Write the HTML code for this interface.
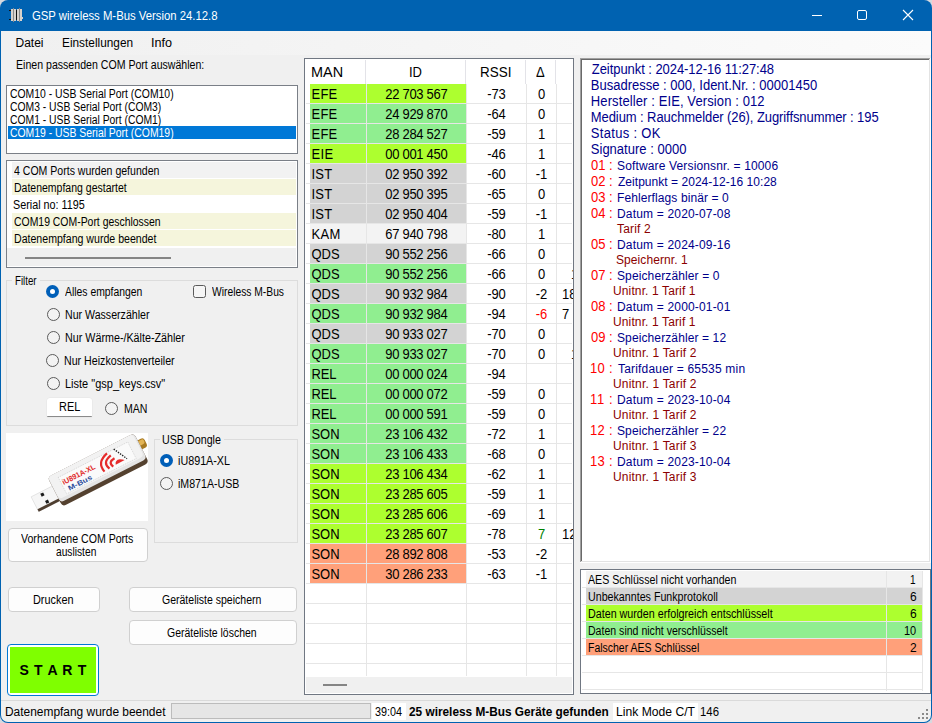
<!DOCTYPE html>
<html><head><meta charset="utf-8"><title>GSP wireless M-Bus</title>
<style>
html,body{margin:0;padding:0;background:#D6D9DF;width:932px;height:723px;overflow:hidden;}
body{position:relative;font-family:"Liberation Sans",sans-serif;}
body div{position:absolute;box-sizing:content-box;}
.t{white-space:pre;}
svg{position:absolute;}
</style></head><body>
<div style="left:0;top:0;width:932px;height:723px;background:#0062B1;border-radius:8px;"></div>
<div style="left:1px;top:31px;width:930px;height:691px;background:#F0F0F0;border-radius:0 0 7px 7px;"></div>
<svg style="left:8px;top:7px" width="16" height="16" viewBox="0 0 16 16">
<rect x="1" y="3" width="2" height="1" fill="#111"/><rect x="1" y="12" width="2" height="1" fill="#111"/>
<rect x="3" y="2" width="5" height="12" fill="#D8D2CC"/><rect x="9" y="2" width="5" height="12" fill="#D8D2CC"/>
<rect x="8" y="3" width="1" height="10" fill="#111"/>
<rect x="5" y="1" width="1" height="14" fill="#8A8A8A"/><rect x="11" y="1" width="1" height="14" fill="#8A8A8A"/>
<rect x="14" y="10" width="1" height="2" fill="#D8D2CC"/>
</svg>
<div class="t" style="left:32.03px;top:10.00px;font-size:12px;line-height:12px;color:#fff;transform:scale(0.9439,1.0000);transform-origin:0 0;">GSP wireless M-Bus Version 24.12.8</div>
<svg style="left:800px;top:0" width="132" height="31" viewBox="0 0 132 31">
<rect x="12" y="15" width="10" height="1" fill="#fff"/>
<rect x="57.5" y="10.5" width="9" height="9" rx="1.5" fill="none" stroke="#fff" stroke-width="1"/>
<path d="M103 10 L113 20 M113 10 L103 20" stroke="#fff" stroke-width="1.1"/>
</svg>
<div style="left:1px;top:31px;width:930px;height:24px;background:linear-gradient(to right,#F0F0F0,#FBFBFB);"></div>
<div class="t" style="left:15.50px;top:37.00px;font-size:12px;line-height:12px;color:#000;">Datei</div>
<div class="t" style="left:61.52px;top:37.00px;font-size:12px;line-height:12px;color:#000;transform:scale(0.9859,1.0000);transform-origin:0 0;">Einstellungen</div>
<div class="t" style="left:151.42px;top:37.00px;font-size:12px;line-height:12px;color:#000;transform:scale(1.0526,1.0000);transform-origin:0 0;">Info</div>
<div class="t" style="left:16.18px;top:59.00px;font-size:12px;line-height:12px;color:#000;transform:scale(0.8821,1.0000);transform-origin:0 0;">Einen passenden COM Port auswählen:</div>
<div style="left:6px;top:85px;width:290px;height:67px;background:#fff;border:1px solid #7A7F87;"></div>
<div class="t" style="left:10.07px;top:88.00px;font-size:12px;line-height:12px;color:#000;transform:scale(0.8670,1.0000);transform-origin:0 0;">COM10 - USB Serial Port (COM10)</div>
<div class="t" style="left:10.07px;top:101.00px;font-size:12px;line-height:12px;color:#000;transform:scale(0.8629,1.0000);transform-origin:0 0;">COM3 - USB Serial Port (COM3)</div>
<div class="t" style="left:10.07px;top:114.00px;font-size:12px;line-height:12px;color:#000;transform:scale(0.8629,1.0000);transform-origin:0 0;">COM1 - USB Serial Port (COM1)</div>
<div style="left:8px;top:126px;width:288px;height:13px;background:#0078D7;"></div>
<div class="t" style="left:10.07px;top:127.00px;font-size:12px;line-height:12px;color:#fff;transform:scale(0.8670,1.0000);transform-origin:0 0;">COM19 - USB Serial Port (COM19)</div>
<div style="left:6px;top:160px;width:290px;height:106px;background:#fff;border:1px solid #7A7F87;"></div>
<div style="left:12px;top:162px;width:284px;height:16px;background:#F2F2F2;"></div>
<div class="t" style="left:14.06px;top:165.00px;font-size:12px;line-height:12px;color:#000;transform:scale(0.8788,1.0000);transform-origin:0 0;">4 COM Ports wurden gefunden</div>
<div style="left:12px;top:179px;width:284px;height:16px;background:#F5F5DC;"></div>
<div class="t" style="left:14.19px;top:182.00px;font-size:12px;line-height:12px;color:#000;transform:scale(0.8750,1.0000);transform-origin:0 0;">Datenempfang gestartet</div>
<div style="left:12px;top:196px;width:284px;height:16px;background:#FFFFFF;"></div>
<div class="t" style="left:13.15px;top:199.00px;font-size:12px;line-height:12px;color:#000;transform:scale(0.8987,1.0000);transform-origin:0 0;">Serial no: 1195</div>
<div style="left:12px;top:213px;width:284px;height:16px;background:#F5F5DC;"></div>
<div class="t" style="left:14.07px;top:216.00px;font-size:12px;line-height:12px;color:#000;transform:scale(0.8690,1.0000);transform-origin:0 0;">COM19 COM-Port geschlossen</div>
<div style="left:12px;top:230px;width:284px;height:16px;background:#F5F5DC;"></div>
<div class="t" style="left:14.18px;top:233.00px;font-size:12px;line-height:12px;color:#000;transform:scale(0.8820,1.0000);transform-origin:0 0;">Datenempfang wurde beendet</div>
<div style="left:7px;top:248px;width:289px;height:18px;background:#F0F0F0;"></div>
<div style="left:25px;top:257px;width:146px;height:2px;background:#858585;"></div>
<div style="left:6px;top:280px;width:290px;height:144px;border:1px solid #DCDCDC;"></div>
<div style="left:12px;top:276px;width:28px;height:10px;background:#F0F0F0;"></div>
<div class="t" style="left:15.29px;top:275.00px;font-size:12px;line-height:12px;color:#000;transform:scale(0.8077,1.0000);transform-origin:0 0;">Filter</div>
<svg style="left:46px;top:285px" width="13" height="13" viewBox="0 0 13 13"><circle cx="6.5" cy="6.5" r="6.5" fill="#005FB8"/><circle cx="6.5" cy="6.5" r="2.5" fill="#fff"/></svg>
<div class="t" style="left:65.07px;top:286.00px;font-size:12px;line-height:12px;color:#000;transform:scale(0.8652,1.0000);transform-origin:0 0;">Alles empfangen</div>
<svg style="left:47px;top:308px" width="13" height="13" viewBox="0 0 13 13"><circle cx="6.5" cy="6.5" r="6" fill="#F3F3F3" stroke="#5A5A5A" stroke-width="1"/></svg>
<div class="t" style="left:65.17px;top:309.00px;font-size:12px;line-height:12px;color:#000;transform:scale(0.8842,1.0000);transform-origin:0 0;">Nur Wasserzähler</div>
<svg style="left:47px;top:331px" width="13" height="13" viewBox="0 0 13 13"><circle cx="6.5" cy="6.5" r="6" fill="#F3F3F3" stroke="#5A5A5A" stroke-width="1"/></svg>
<div class="t" style="left:65.16px;top:332.00px;font-size:12px;line-height:12px;color:#000;transform:scale(0.8947,1.0000);transform-origin:0 0;">Nur Wärme-/Kälte-Zähler</div>
<svg style="left:46px;top:354px" width="13" height="13" viewBox="0 0 13 13"><circle cx="6.5" cy="6.5" r="6" fill="#F3F3F3" stroke="#5A5A5A" stroke-width="1"/></svg>
<div class="t" style="left:64.17px;top:355.00px;font-size:12px;line-height:12px;color:#000;transform:scale(0.8871,1.0000);transform-origin:0 0;">Nur Heizkostenverteiler</div>
<svg style="left:47px;top:377px" width="13" height="13" viewBox="0 0 13 13"><circle cx="6.5" cy="6.5" r="6" fill="#F3F3F3" stroke="#5A5A5A" stroke-width="1"/></svg>
<div class="t" style="left:65.12px;top:378.00px;font-size:12px;line-height:12px;color:#000;transform:scale(0.9167,1.0000);transform-origin:0 0;">Liste &quot;gsp_keys.csv&quot;</div>
<svg style="left:193px;top:285px" width="14" height="14" viewBox="0 0 14 14"><rect x="0.5" y="0.5" width="12" height="12" rx="2" fill="#F5F5F5" stroke="#5A5A5A" stroke-width="1"/></svg>
<div class="t" style="left:212.07px;top:286.00px;font-size:12px;line-height:12px;color:#000;transform:scale(0.8571,1.0000);transform-origin:0 0;">Wireless M-Bus</div>
<div style="left:47px;top:398px;width:45px;height:19px;background:#fff;border-bottom:1px solid #8A8A8A;box-sizing:border-box;border-radius:3px 3px 1px 1px;box-shadow:0 0 0 0.5px #E4E4E4;"></div>
<div class="t" style="left:59.14px;top:401.00px;font-size:12px;line-height:12px;color:#000;transform:scale(0.9091,1.0000);transform-origin:0 0;">REL</div>
<svg style="left:105px;top:402px" width="13" height="13" viewBox="0 0 13 13"><circle cx="6.5" cy="6.5" r="6" fill="#F3F3F3" stroke="#5A5A5A" stroke-width="1"/></svg>
<div class="t" style="left:124.18px;top:403.00px;font-size:12px;line-height:12px;color:#000;transform:scale(0.8800,1.0000);transform-origin:0 0;">MAN</div>
<svg style="left:6px;top:433px" width="142" height="88" viewBox="6 433 142 88">
<rect x="6" y="433" width="142" height="88" fill="#fff"/>
<g transform="translate(98,469.5) rotate(-27)">
 <rect x="-72" y="-6" width="27" height="16.5" fill="#F6F6F6" stroke="#DADADA" stroke-width="0.6"/>
 <rect x="-72" y="8" width="27" height="2.8" fill="#4E3E30"/>
 <rect x="-62.5" y="-4.5" width="3.2" height="3.2" fill="#1A1A1A"/>
 <rect x="-61.5" y="4" width="3.2" height="3.2" fill="#1A1A1A"/>
 <rect x="42" y="-8" width="13" height="10" rx="3" fill="#A87A22"/>
 <rect x="45" y="-7" width="9" height="5" rx="2" fill="#E2B455"/>
 <rect x="-48.5" y="-16" width="97" height="33" rx="4" fill="#54412F"/>
 <rect x="-48.5" y="-16" width="97" height="28.5" rx="4" fill="#E4E4E4"/>
 <rect x="-48" y="-16" width="95" height="25" rx="4" fill="#F2F2F2"/>
 <rect x="-39" y="-11" width="78" height="18.5" fill="#FAFAFA" stroke="#BDBDBD" stroke-width="0.5" stroke-dasharray="1 1"/>
 <text x="-37.5" y="-1.8" font-family="Liberation Sans" font-weight="bold" font-size="7.6" fill="#E02828" textLength="36" lengthAdjust="spacingAndGlyphs">iU891A-XL</text>
 <text x="-35" y="6" font-family="Liberation Sans" font-weight="bold" font-size="7" fill="#2B4C9B" textLength="26" lengthAdjust="spacingAndGlyphs">M-Bus</text>
</g>
<g fill="none" stroke="#E52B2B" stroke-width="2.2" stroke-linecap="butt">
 <path d="M107 453.3 Q96.5 462.4 104.5 471.6"/>
 <path d="M110.8 455.4 Q101.8 462.8 109.5 468.7"/>
 <path d="M114.5 458.3 Q107.5 462.4 113.3 466.6"/>
</g>
<path d="M115.7 464.8 Q114.8 459.8 119.9 459.3 Q122.5 459.3 124.6 460.1 Z" fill="#E52B2B"/>
<path d="M113.7 449.1 L127 458.7" stroke="#222" stroke-width="1.4" stroke-dasharray="1.4 1.2"/>
</svg>
<div style="left:154px;top:439px;width:142px;height:102px;border:1px solid #DCDCDC;"></div>
<div style="left:160px;top:434px;width:64px;height:10px;background:#F0F0F0;"></div>
<div class="t" style="left:162.16px;top:434.00px;font-size:12px;line-height:12px;color:#000;transform:scale(0.8923,1.0000);transform-origin:0 0;">USB Dongle</div>
<svg style="left:160px;top:454px" width="13" height="13" viewBox="0 0 13 13"><circle cx="6.5" cy="6.5" r="6.5" fill="#005FB8"/><circle cx="6.5" cy="6.5" r="2.5" fill="#fff"/></svg>
<div class="t" style="left:178.05px;top:455.00px;font-size:12px;line-height:12px;color:#000;transform:scale(0.8966,1.0000);transform-origin:0 0;">iU891A-XL</div>
<svg style="left:160px;top:477px" width="13" height="13" viewBox="0 0 13 13"><circle cx="6.5" cy="6.5" r="6" fill="#F3F3F3" stroke="#5A5A5A" stroke-width="1"/></svg>
<div class="t" style="left:178.06px;top:478.00px;font-size:12px;line-height:12px;color:#000;transform:scale(0.8841,1.0000);transform-origin:0 0;">iM871A-USB</div>
<div style="left:8px;top:528px;width:138px;height:32px;background:#FDFDFD;border:1px solid #D0D0D0;border-radius:4px;"></div>
<div class="t" style="left:21.06px;top:533.00px;font-size:12px;line-height:12px;color:#000;transform:scale(0.8819,1.0000);transform-origin:0 0;">Vorhandene COM Ports</div>
<div class="t" style="left:56.07px;top:546.00px;font-size:12px;line-height:12px;color:#000;transform:scale(0.8511,1.0000);transform-origin:0 0;">auslisten</div>
<div style="left:8px;top:587px;width:90px;height:23px;background:#FDFDFD;border:1px solid #D0D0D0;border-radius:4px;"></div>
<div class="t" style="left:33.14px;top:594.00px;font-size:12px;line-height:12px;color:#000;transform:scale(0.9070,1.0000);transform-origin:0 0;">Drucken</div>
<div style="left:129px;top:587px;width:166px;height:23px;background:#FDFDFD;border:1px solid #D0D0D0;border-radius:4px;"></div>
<div class="t" style="left:162.06px;top:594.00px;font-size:12px;line-height:12px;color:#000;transform:scale(0.8761,1.0000);transform-origin:0 0;">Geräteliste speichern</div>
<div style="left:129px;top:620px;width:166px;height:23px;background:#FDFDFD;border:1px solid #D0D0D0;border-radius:4px;"></div>
<div class="t" style="left:167.06px;top:627.00px;font-size:12px;line-height:12px;color:#000;transform:scale(0.8725,1.0000);transform-origin:0 0;">Geräteliste löschen</div>
<div style="left:7px;top:644px;width:90px;height:50px;border:1px solid #0078D4;border-radius:4px;background:#fff;"></div>
<div style="left:10px;top:647px;width:86px;height:46px;background:#7FFF00;"></div>
<div class="t" style="left:19.50px;top:663.00px;font-size:14px;line-height:14px;font-weight:bold;color:#000;letter-spacing:0.688px;">S T A R T</div>
<div style="left:1px;top:700px;width:930px;height:1px;background:#DADADA;"></div>
<div class="t" style="left:5.01px;top:706.00px;font-size:12px;line-height:12px;color:#000;transform:scale(0.9938,1.0000);transform-origin:0 0;">Datenempfang wurde beendet</div>
<div style="left:171px;top:703px;width:200px;height:16px;background:#E6E6E6;border:1px solid #BCBCBC;box-sizing:border-box;"></div>
<div style="left:372px;top:703px;width:34px;height:17px;background:#fff;"></div>
<div class="t" style="left:375.05px;top:706.00px;font-size:12px;line-height:12px;color:#000;transform:scale(0.9000,1.0000);transform-origin:0 0;">39:04</div>
<div class="t" style="left:409.01px;top:706.00px;font-size:12px;line-height:12px;font-weight:bold;color:#000;transform:scale(0.9852,1.0000);transform-origin:0 0;">25 wireless M-Bus Geräte gefunden</div>
<div style="left:613px;top:703px;width:85px;height:17px;background:#fff;"></div>
<div class="t" style="left:615.98px;top:706.00px;font-size:12px;line-height:12px;color:#000;transform:scale(1.0130,1.0000);transform-origin:0 0;">Link Mode C/T</div>
<div class="t" style="left:700.08px;top:706.00px;font-size:12px;line-height:12px;color:#000;transform:scale(0.9474,1.0000);transform-origin:0 0;">146</div>
<div style="left:926px;top:709px;width:2px;height:2px;background:#8A8A8A;"></div>
<div style="left:922px;top:713px;width:2px;height:2px;background:#8A8A8A;"></div>
<div style="left:926px;top:713px;width:2px;height:2px;background:#8A8A8A;"></div>
<div style="left:918px;top:717px;width:2px;height:2px;background:#8A8A8A;"></div>
<div style="left:922px;top:717px;width:2px;height:2px;background:#8A8A8A;"></div>
<div style="left:926px;top:717px;width:2px;height:2px;background:#8A8A8A;"></div>
<div style="left:304px;top:58px;width:268px;height:635px;background:#fff;border:1px solid #707782;"></div>
<div class="t" style="left:310.83px;top:65.12px;font-size:13px;line-height:13px;color:#000;transform:scale(1.1111,1.0800);transform-origin:0 0;">MAN</div>
<div class="t" style="left:409.00px;top:65.12px;font-size:13px;line-height:13px;color:#000;transform:scale(1.0000,1.0800);transform-origin:0 0;">ID</div>
<div class="t" style="left:479.95px;top:65.12px;font-size:13px;line-height:13px;color:#000;transform:scale(1.0345,1.0800);transform-origin:0 0;">RSSI</div>
<div class="t" style="left:536.00px;top:65.12px;font-size:13px;line-height:13px;color:#000;transform:scale(1.0000,1.0800);transform-origin:0 0;">Δ</div>
<div style="left:365px;top:60px;width:1px;height:24px;background:#E3E3E8;"></div>
<div style="left:465px;top:60px;width:1px;height:24px;background:#E3E3E8;"></div>
<div style="left:525px;top:60px;width:1px;height:24px;background:#E3E3E8;"></div>
<div style="left:555px;top:60px;width:1px;height:24px;background:#E3E3E8;"></div>
<div style="left:366px;top:84px;width:1px;height:592px;background:#E6E6E6;"></div>
<div style="left:466px;top:84px;width:1px;height:592px;background:#E6E6E6;"></div>
<div style="left:526px;top:84px;width:1px;height:592px;background:#E6E6E6;"></div>
<div style="left:556px;top:84px;width:1px;height:592px;background:#E6E6E6;"></div>
<div style="left:306px;top:103px;width:266px;height:1px;background:#E6E6E6;"></div>
<div style="left:306px;top:123px;width:266px;height:1px;background:#E6E6E6;"></div>
<div style="left:306px;top:143px;width:266px;height:1px;background:#E6E6E6;"></div>
<div style="left:306px;top:163px;width:266px;height:1px;background:#E6E6E6;"></div>
<div style="left:306px;top:183px;width:266px;height:1px;background:#E6E6E6;"></div>
<div style="left:306px;top:203px;width:266px;height:1px;background:#E6E6E6;"></div>
<div style="left:306px;top:223px;width:266px;height:1px;background:#E6E6E6;"></div>
<div style="left:306px;top:243px;width:266px;height:1px;background:#E6E6E6;"></div>
<div style="left:306px;top:263px;width:266px;height:1px;background:#E6E6E6;"></div>
<div style="left:306px;top:283px;width:266px;height:1px;background:#E6E6E6;"></div>
<div style="left:306px;top:303px;width:266px;height:1px;background:#E6E6E6;"></div>
<div style="left:306px;top:323px;width:266px;height:1px;background:#E6E6E6;"></div>
<div style="left:306px;top:343px;width:266px;height:1px;background:#E6E6E6;"></div>
<div style="left:306px;top:363px;width:266px;height:1px;background:#E6E6E6;"></div>
<div style="left:306px;top:383px;width:266px;height:1px;background:#E6E6E6;"></div>
<div style="left:306px;top:403px;width:266px;height:1px;background:#E6E6E6;"></div>
<div style="left:306px;top:423px;width:266px;height:1px;background:#E6E6E6;"></div>
<div style="left:306px;top:443px;width:266px;height:1px;background:#E6E6E6;"></div>
<div style="left:306px;top:463px;width:266px;height:1px;background:#E6E6E6;"></div>
<div style="left:306px;top:483px;width:266px;height:1px;background:#E6E6E6;"></div>
<div style="left:306px;top:503px;width:266px;height:1px;background:#E6E6E6;"></div>
<div style="left:306px;top:523px;width:266px;height:1px;background:#E6E6E6;"></div>
<div style="left:306px;top:543px;width:266px;height:1px;background:#E6E6E6;"></div>
<div style="left:306px;top:563px;width:266px;height:1px;background:#E6E6E6;"></div>
<div style="left:306px;top:583px;width:266px;height:1px;background:#E6E6E6;"></div>
<div style="left:306px;top:603px;width:266px;height:1px;background:#E6E6E6;"></div>
<div style="left:306px;top:623px;width:266px;height:1px;background:#E6E6E6;"></div>
<div style="left:306px;top:643px;width:266px;height:1px;background:#E6E6E6;"></div>
<div style="left:306px;top:663px;width:266px;height:1px;background:#E6E6E6;"></div>
<div style="left:310px;top:84px;width:56px;height:19px;background:#ADFF2F;"></div>
<div style="left:367px;top:84px;width:99px;height:19px;background:#ADFF2F;"></div>
<div class="t" style="left:311.5px;top:87.12px;font-size:13px;line-height:13px;color:#000;letter-spacing:0.239px;transform:scaleY(1.08);transform-origin:0 0;">EFE</div>
<div class="t" style="left:356.5px;top:87.12px;width:120px;text-align:center;font-size:13px;line-height:13px;color:#000;letter-spacing:-0.300px;text-indent:-0.300px;transform:scaleY(1.08);transform-origin:0 0;">22 703 567</div>
<div class="t" style="left:436.5px;top:87.12px;width:120px;text-align:center;font-size:13px;line-height:13px;color:#000;letter-spacing:-0.263px;text-indent:-0.263px;transform:scaleY(1.08);transform-origin:0 0;">-73</div>
<div class="t" style="left:481.5px;top:87.12px;width:120px;text-align:center;font-size:13px;line-height:13px;color:#000;letter-spacing:0.000px;text-indent:0.000px;transform:scaleY(1.08);transform-origin:0 0;">0</div>
<div style="left:310px;top:104px;width:56px;height:19px;background:#90EE90;"></div>
<div style="left:367px;top:104px;width:99px;height:19px;background:#90EE90;"></div>
<div class="t" style="left:311.5px;top:107.12px;font-size:13px;line-height:13px;color:#000;letter-spacing:0.239px;transform:scaleY(1.08);transform-origin:0 0;">EFE</div>
<div class="t" style="left:356.5px;top:107.12px;width:120px;text-align:center;font-size:13px;line-height:13px;color:#000;letter-spacing:-0.300px;text-indent:-0.300px;transform:scaleY(1.08);transform-origin:0 0;">24 929 870</div>
<div class="t" style="left:436.5px;top:107.12px;width:120px;text-align:center;font-size:13px;line-height:13px;color:#000;letter-spacing:-0.263px;text-indent:-0.263px;transform:scaleY(1.08);transform-origin:0 0;">-64</div>
<div class="t" style="left:481.5px;top:107.12px;width:120px;text-align:center;font-size:13px;line-height:13px;color:#000;letter-spacing:0.000px;text-indent:0.000px;transform:scaleY(1.08);transform-origin:0 0;">0</div>
<div style="left:310px;top:124px;width:56px;height:19px;background:#90EE90;"></div>
<div style="left:367px;top:124px;width:99px;height:19px;background:#90EE90;"></div>
<div class="t" style="left:311.5px;top:127.12px;font-size:13px;line-height:13px;color:#000;letter-spacing:0.239px;transform:scaleY(1.08);transform-origin:0 0;">EFE</div>
<div class="t" style="left:356.5px;top:127.12px;width:120px;text-align:center;font-size:13px;line-height:13px;color:#000;letter-spacing:-0.300px;text-indent:-0.300px;transform:scaleY(1.08);transform-origin:0 0;">28 284 527</div>
<div class="t" style="left:436.5px;top:127.12px;width:120px;text-align:center;font-size:13px;line-height:13px;color:#000;letter-spacing:-0.263px;text-indent:-0.263px;transform:scaleY(1.08);transform-origin:0 0;">-59</div>
<div class="t" style="left:481.5px;top:127.12px;width:120px;text-align:center;font-size:13px;line-height:13px;color:#000;letter-spacing:0.000px;text-indent:0.000px;transform:scaleY(1.08);transform-origin:0 0;">1</div>
<div style="left:310px;top:144px;width:56px;height:19px;background:#ADFF2F;"></div>
<div style="left:367px;top:144px;width:99px;height:19px;background:#ADFF2F;"></div>
<div class="t" style="left:311.5px;top:147.12px;font-size:13px;line-height:13px;color:#000;letter-spacing:0.349px;transform:scaleY(1.08);transform-origin:0 0;">EIE</div>
<div class="t" style="left:356.5px;top:147.12px;width:120px;text-align:center;font-size:13px;line-height:13px;color:#000;letter-spacing:-0.300px;text-indent:-0.300px;transform:scaleY(1.08);transform-origin:0 0;">00 001 450</div>
<div class="t" style="left:436.5px;top:147.12px;width:120px;text-align:center;font-size:13px;line-height:13px;color:#000;letter-spacing:-0.263px;text-indent:-0.263px;transform:scaleY(1.08);transform-origin:0 0;">-46</div>
<div class="t" style="left:481.5px;top:147.12px;width:120px;text-align:center;font-size:13px;line-height:13px;color:#000;letter-spacing:0.000px;text-indent:0.000px;transform:scaleY(1.08);transform-origin:0 0;">1</div>
<div style="left:310px;top:164px;width:56px;height:19px;background:#D3D3D3;"></div>
<div style="left:367px;top:164px;width:99px;height:19px;background:#D3D3D3;"></div>
<div class="t" style="left:311.5px;top:167.12px;font-size:13px;line-height:13px;color:#000;letter-spacing:0.259px;transform:scaleY(1.08);transform-origin:0 0;">IST</div>
<div class="t" style="left:356.5px;top:167.12px;width:120px;text-align:center;font-size:13px;line-height:13px;color:#000;letter-spacing:-0.300px;text-indent:-0.300px;transform:scaleY(1.08);transform-origin:0 0;">02 950 392</div>
<div class="t" style="left:436.5px;top:167.12px;width:120px;text-align:center;font-size:13px;line-height:13px;color:#000;letter-spacing:-0.263px;text-indent:-0.263px;transform:scaleY(1.08);transform-origin:0 0;">-60</div>
<div class="t" style="left:481.5px;top:167.12px;width:120px;text-align:center;font-size:13px;line-height:13px;color:#000;letter-spacing:-0.280px;text-indent:-0.280px;transform:scaleY(1.08);transform-origin:0 0;">-1</div>
<div style="left:310px;top:184px;width:56px;height:19px;background:#D3D3D3;"></div>
<div style="left:367px;top:184px;width:99px;height:19px;background:#D3D3D3;"></div>
<div class="t" style="left:311.5px;top:187.12px;font-size:13px;line-height:13px;color:#000;letter-spacing:0.259px;transform:scaleY(1.08);transform-origin:0 0;">IST</div>
<div class="t" style="left:356.5px;top:187.12px;width:120px;text-align:center;font-size:13px;line-height:13px;color:#000;letter-spacing:-0.300px;text-indent:-0.300px;transform:scaleY(1.08);transform-origin:0 0;">02 950 395</div>
<div class="t" style="left:436.5px;top:187.12px;width:120px;text-align:center;font-size:13px;line-height:13px;color:#000;letter-spacing:-0.263px;text-indent:-0.263px;transform:scaleY(1.08);transform-origin:0 0;">-65</div>
<div class="t" style="left:481.5px;top:187.12px;width:120px;text-align:center;font-size:13px;line-height:13px;color:#000;letter-spacing:0.000px;text-indent:0.000px;transform:scaleY(1.08);transform-origin:0 0;">0</div>
<div style="left:310px;top:204px;width:56px;height:19px;background:#D3D3D3;"></div>
<div style="left:367px;top:204px;width:99px;height:19px;background:#D3D3D3;"></div>
<div class="t" style="left:311.5px;top:207.12px;font-size:13px;line-height:13px;color:#000;letter-spacing:0.259px;transform:scaleY(1.08);transform-origin:0 0;">IST</div>
<div class="t" style="left:356.5px;top:207.12px;width:120px;text-align:center;font-size:13px;line-height:13px;color:#000;letter-spacing:-0.300px;text-indent:-0.300px;transform:scaleY(1.08);transform-origin:0 0;">02 950 404</div>
<div class="t" style="left:436.5px;top:207.12px;width:120px;text-align:center;font-size:13px;line-height:13px;color:#000;letter-spacing:-0.263px;text-indent:-0.263px;transform:scaleY(1.08);transform-origin:0 0;">-59</div>
<div class="t" style="left:481.5px;top:207.12px;width:120px;text-align:center;font-size:13px;line-height:13px;color:#000;letter-spacing:-0.280px;text-indent:-0.280px;transform:scaleY(1.08);transform-origin:0 0;">-1</div>
<div style="left:310px;top:224px;width:56px;height:19px;background:#F3F3F3;"></div>
<div style="left:367px;top:224px;width:99px;height:19px;background:#F3F3F3;"></div>
<div class="t" style="left:311.5px;top:227.12px;font-size:13px;line-height:13px;color:#000;letter-spacing:0.276px;transform:scaleY(1.08);transform-origin:0 0;">KAM</div>
<div class="t" style="left:356.5px;top:227.12px;width:120px;text-align:center;font-size:13px;line-height:13px;color:#000;letter-spacing:-0.300px;text-indent:-0.300px;transform:scaleY(1.08);transform-origin:0 0;">67 940 798</div>
<div class="t" style="left:436.5px;top:227.12px;width:120px;text-align:center;font-size:13px;line-height:13px;color:#000;letter-spacing:-0.263px;text-indent:-0.263px;transform:scaleY(1.08);transform-origin:0 0;">-80</div>
<div class="t" style="left:481.5px;top:227.12px;width:120px;text-align:center;font-size:13px;line-height:13px;color:#000;letter-spacing:0.000px;text-indent:0.000px;transform:scaleY(1.08);transform-origin:0 0;">1</div>
<div style="left:310px;top:244px;width:56px;height:19px;background:#D3D3D3;"></div>
<div style="left:367px;top:244px;width:99px;height:19px;background:#D3D3D3;"></div>
<div class="t" style="left:311.5px;top:247.12px;font-size:13px;line-height:13px;color:#000;letter-spacing:-0.057px;transform:scaleY(1.08);transform-origin:0 0;">QDS</div>
<div class="t" style="left:356.5px;top:247.12px;width:120px;text-align:center;font-size:13px;line-height:13px;color:#000;letter-spacing:-0.300px;text-indent:-0.300px;transform:scaleY(1.08);transform-origin:0 0;">90 552 256</div>
<div class="t" style="left:436.5px;top:247.12px;width:120px;text-align:center;font-size:13px;line-height:13px;color:#000;letter-spacing:-0.263px;text-indent:-0.263px;transform:scaleY(1.08);transform-origin:0 0;">-66</div>
<div class="t" style="left:481.5px;top:247.12px;width:120px;text-align:center;font-size:13px;line-height:13px;color:#000;letter-spacing:0.000px;text-indent:0.000px;transform:scaleY(1.08);transform-origin:0 0;">0</div>
<div style="left:310px;top:264px;width:56px;height:19px;background:#90EE90;"></div>
<div style="left:367px;top:264px;width:99px;height:19px;background:#90EE90;"></div>
<div class="t" style="left:311.5px;top:267.12px;font-size:13px;line-height:13px;color:#000;letter-spacing:-0.057px;transform:scaleY(1.08);transform-origin:0 0;">QDS</div>
<div class="t" style="left:356.5px;top:267.12px;width:120px;text-align:center;font-size:13px;line-height:13px;color:#000;letter-spacing:-0.300px;text-indent:-0.300px;transform:scaleY(1.08);transform-origin:0 0;">90 552 256</div>
<div class="t" style="left:436.5px;top:267.12px;width:120px;text-align:center;font-size:13px;line-height:13px;color:#000;letter-spacing:-0.263px;text-indent:-0.263px;transform:scaleY(1.08);transform-origin:0 0;">-66</div>
<div class="t" style="left:481.5px;top:267.12px;width:120px;text-align:center;font-size:13px;line-height:13px;color:#000;letter-spacing:0.000px;text-indent:0.000px;transform:scaleY(1.08);transform-origin:0 0;">0</div>
<div style="left:310px;top:284px;width:56px;height:19px;background:#D3D3D3;"></div>
<div style="left:367px;top:284px;width:99px;height:19px;background:#D3D3D3;"></div>
<div class="t" style="left:311.5px;top:287.12px;font-size:13px;line-height:13px;color:#000;letter-spacing:-0.057px;transform:scaleY(1.08);transform-origin:0 0;">QDS</div>
<div class="t" style="left:356.5px;top:287.12px;width:120px;text-align:center;font-size:13px;line-height:13px;color:#000;letter-spacing:-0.300px;text-indent:-0.300px;transform:scaleY(1.08);transform-origin:0 0;">90 932 984</div>
<div class="t" style="left:436.5px;top:287.12px;width:120px;text-align:center;font-size:13px;line-height:13px;color:#000;letter-spacing:-0.263px;text-indent:-0.263px;transform:scaleY(1.08);transform-origin:0 0;">-90</div>
<div class="t" style="left:481.5px;top:287.12px;width:120px;text-align:center;font-size:13px;line-height:13px;color:#000;letter-spacing:-0.280px;text-indent:-0.280px;transform:scaleY(1.08);transform-origin:0 0;">-2</div>
<div style="left:310px;top:304px;width:56px;height:19px;background:#90EE90;"></div>
<div style="left:367px;top:304px;width:99px;height:19px;background:#90EE90;"></div>
<div class="t" style="left:311.5px;top:307.12px;font-size:13px;line-height:13px;color:#000;letter-spacing:-0.057px;transform:scaleY(1.08);transform-origin:0 0;">QDS</div>
<div class="t" style="left:356.5px;top:307.12px;width:120px;text-align:center;font-size:13px;line-height:13px;color:#000;letter-spacing:-0.300px;text-indent:-0.300px;transform:scaleY(1.08);transform-origin:0 0;">90 932 984</div>
<div class="t" style="left:436.5px;top:307.12px;width:120px;text-align:center;font-size:13px;line-height:13px;color:#000;letter-spacing:-0.263px;text-indent:-0.263px;transform:scaleY(1.08);transform-origin:0 0;">-94</div>
<div class="t" style="left:481.5px;top:307.12px;width:120px;text-align:center;font-size:13px;line-height:13px;color:#FF0000;letter-spacing:-0.280px;text-indent:-0.280px;transform:scaleY(1.08);transform-origin:0 0;">-6</div>
<div style="left:310px;top:324px;width:56px;height:19px;background:#D3D3D3;"></div>
<div style="left:367px;top:324px;width:99px;height:19px;background:#D3D3D3;"></div>
<div class="t" style="left:311.5px;top:327.12px;font-size:13px;line-height:13px;color:#000;letter-spacing:-0.057px;transform:scaleY(1.08);transform-origin:0 0;">QDS</div>
<div class="t" style="left:356.5px;top:327.12px;width:120px;text-align:center;font-size:13px;line-height:13px;color:#000;letter-spacing:-0.300px;text-indent:-0.300px;transform:scaleY(1.08);transform-origin:0 0;">90 933 027</div>
<div class="t" style="left:436.5px;top:327.12px;width:120px;text-align:center;font-size:13px;line-height:13px;color:#000;letter-spacing:-0.263px;text-indent:-0.263px;transform:scaleY(1.08);transform-origin:0 0;">-70</div>
<div class="t" style="left:481.5px;top:327.12px;width:120px;text-align:center;font-size:13px;line-height:13px;color:#000;letter-spacing:0.000px;text-indent:0.000px;transform:scaleY(1.08);transform-origin:0 0;">0</div>
<div style="left:310px;top:344px;width:56px;height:19px;background:#90EE90;"></div>
<div style="left:367px;top:344px;width:99px;height:19px;background:#90EE90;"></div>
<div class="t" style="left:311.5px;top:347.12px;font-size:13px;line-height:13px;color:#000;letter-spacing:-0.057px;transform:scaleY(1.08);transform-origin:0 0;">QDS</div>
<div class="t" style="left:356.5px;top:347.12px;width:120px;text-align:center;font-size:13px;line-height:13px;color:#000;letter-spacing:-0.300px;text-indent:-0.300px;transform:scaleY(1.08);transform-origin:0 0;">90 933 027</div>
<div class="t" style="left:436.5px;top:347.12px;width:120px;text-align:center;font-size:13px;line-height:13px;color:#000;letter-spacing:-0.263px;text-indent:-0.263px;transform:scaleY(1.08);transform-origin:0 0;">-70</div>
<div class="t" style="left:481.5px;top:347.12px;width:120px;text-align:center;font-size:13px;line-height:13px;color:#000;letter-spacing:0.000px;text-indent:0.000px;transform:scaleY(1.08);transform-origin:0 0;">0</div>
<div style="left:310px;top:364px;width:56px;height:19px;background:#90EE90;"></div>
<div style="left:367px;top:364px;width:99px;height:19px;background:#90EE90;"></div>
<div class="t" style="left:311.5px;top:367.12px;font-size:13px;line-height:13px;color:#000;letter-spacing:-0.096px;transform:scaleY(1.08);transform-origin:0 0;">REL</div>
<div class="t" style="left:356.5px;top:367.12px;width:120px;text-align:center;font-size:13px;line-height:13px;color:#000;letter-spacing:-0.300px;text-indent:-0.300px;transform:scaleY(1.08);transform-origin:0 0;">00 000 024</div>
<div class="t" style="left:436.5px;top:367.12px;width:120px;text-align:center;font-size:13px;line-height:13px;color:#000;letter-spacing:-0.263px;text-indent:-0.263px;transform:scaleY(1.08);transform-origin:0 0;">-94</div>
<div class="t" style="left:481.5px;top:367.12px;width:120px;text-align:center;font-size:13px;line-height:13px;color:#000;letter-spacing:0.000px;text-indent:0.000px;transform:scaleY(1.08);transform-origin:0 0;"></div>
<div style="left:310px;top:384px;width:56px;height:19px;background:#90EE90;"></div>
<div style="left:367px;top:384px;width:99px;height:19px;background:#90EE90;"></div>
<div class="t" style="left:311.5px;top:387.12px;font-size:13px;line-height:13px;color:#000;letter-spacing:-0.096px;transform:scaleY(1.08);transform-origin:0 0;">REL</div>
<div class="t" style="left:356.5px;top:387.12px;width:120px;text-align:center;font-size:13px;line-height:13px;color:#000;letter-spacing:-0.300px;text-indent:-0.300px;transform:scaleY(1.08);transform-origin:0 0;">00 000 072</div>
<div class="t" style="left:436.5px;top:387.12px;width:120px;text-align:center;font-size:13px;line-height:13px;color:#000;letter-spacing:-0.263px;text-indent:-0.263px;transform:scaleY(1.08);transform-origin:0 0;">-59</div>
<div class="t" style="left:481.5px;top:387.12px;width:120px;text-align:center;font-size:13px;line-height:13px;color:#000;letter-spacing:0.000px;text-indent:0.000px;transform:scaleY(1.08);transform-origin:0 0;">0</div>
<div style="left:310px;top:404px;width:56px;height:19px;background:#90EE90;"></div>
<div style="left:367px;top:404px;width:99px;height:19px;background:#90EE90;"></div>
<div class="t" style="left:311.5px;top:407.12px;font-size:13px;line-height:13px;color:#000;letter-spacing:-0.096px;transform:scaleY(1.08);transform-origin:0 0;">REL</div>
<div class="t" style="left:356.5px;top:407.12px;width:120px;text-align:center;font-size:13px;line-height:13px;color:#000;letter-spacing:-0.300px;text-indent:-0.300px;transform:scaleY(1.08);transform-origin:0 0;">00 000 591</div>
<div class="t" style="left:436.5px;top:407.12px;width:120px;text-align:center;font-size:13px;line-height:13px;color:#000;letter-spacing:-0.263px;text-indent:-0.263px;transform:scaleY(1.08);transform-origin:0 0;">-59</div>
<div class="t" style="left:481.5px;top:407.12px;width:120px;text-align:center;font-size:13px;line-height:13px;color:#000;letter-spacing:0.000px;text-indent:0.000px;transform:scaleY(1.08);transform-origin:0 0;">0</div>
<div style="left:310px;top:424px;width:56px;height:19px;background:#90EE90;"></div>
<div style="left:367px;top:424px;width:99px;height:19px;background:#90EE90;"></div>
<div class="t" style="left:311.5px;top:427.12px;font-size:13px;line-height:13px;color:#000;letter-spacing:-0.057px;transform:scaleY(1.08);transform-origin:0 0;">SON</div>
<div class="t" style="left:356.5px;top:427.12px;width:120px;text-align:center;font-size:13px;line-height:13px;color:#000;letter-spacing:-0.300px;text-indent:-0.300px;transform:scaleY(1.08);transform-origin:0 0;">23 106 432</div>
<div class="t" style="left:436.5px;top:427.12px;width:120px;text-align:center;font-size:13px;line-height:13px;color:#000;letter-spacing:-0.263px;text-indent:-0.263px;transform:scaleY(1.08);transform-origin:0 0;">-72</div>
<div class="t" style="left:481.5px;top:427.12px;width:120px;text-align:center;font-size:13px;line-height:13px;color:#000;letter-spacing:0.000px;text-indent:0.000px;transform:scaleY(1.08);transform-origin:0 0;">1</div>
<div style="left:310px;top:444px;width:56px;height:19px;background:#90EE90;"></div>
<div style="left:367px;top:444px;width:99px;height:19px;background:#90EE90;"></div>
<div class="t" style="left:311.5px;top:447.12px;font-size:13px;line-height:13px;color:#000;letter-spacing:-0.057px;transform:scaleY(1.08);transform-origin:0 0;">SON</div>
<div class="t" style="left:356.5px;top:447.12px;width:120px;text-align:center;font-size:13px;line-height:13px;color:#000;letter-spacing:-0.300px;text-indent:-0.300px;transform:scaleY(1.08);transform-origin:0 0;">23 106 433</div>
<div class="t" style="left:436.5px;top:447.12px;width:120px;text-align:center;font-size:13px;line-height:13px;color:#000;letter-spacing:-0.263px;text-indent:-0.263px;transform:scaleY(1.08);transform-origin:0 0;">-68</div>
<div class="t" style="left:481.5px;top:447.12px;width:120px;text-align:center;font-size:13px;line-height:13px;color:#000;letter-spacing:0.000px;text-indent:0.000px;transform:scaleY(1.08);transform-origin:0 0;">0</div>
<div style="left:310px;top:464px;width:56px;height:19px;background:#ADFF2F;"></div>
<div style="left:367px;top:464px;width:99px;height:19px;background:#ADFF2F;"></div>
<div class="t" style="left:311.5px;top:467.12px;font-size:13px;line-height:13px;color:#000;letter-spacing:-0.057px;transform:scaleY(1.08);transform-origin:0 0;">SON</div>
<div class="t" style="left:356.5px;top:467.12px;width:120px;text-align:center;font-size:13px;line-height:13px;color:#000;letter-spacing:-0.300px;text-indent:-0.300px;transform:scaleY(1.08);transform-origin:0 0;">23 106 434</div>
<div class="t" style="left:436.5px;top:467.12px;width:120px;text-align:center;font-size:13px;line-height:13px;color:#000;letter-spacing:-0.263px;text-indent:-0.263px;transform:scaleY(1.08);transform-origin:0 0;">-62</div>
<div class="t" style="left:481.5px;top:467.12px;width:120px;text-align:center;font-size:13px;line-height:13px;color:#000;letter-spacing:0.000px;text-indent:0.000px;transform:scaleY(1.08);transform-origin:0 0;">1</div>
<div style="left:310px;top:484px;width:56px;height:19px;background:#ADFF2F;"></div>
<div style="left:367px;top:484px;width:99px;height:19px;background:#ADFF2F;"></div>
<div class="t" style="left:311.5px;top:487.12px;font-size:13px;line-height:13px;color:#000;letter-spacing:-0.057px;transform:scaleY(1.08);transform-origin:0 0;">SON</div>
<div class="t" style="left:356.5px;top:487.12px;width:120px;text-align:center;font-size:13px;line-height:13px;color:#000;letter-spacing:-0.300px;text-indent:-0.300px;transform:scaleY(1.08);transform-origin:0 0;">23 285 605</div>
<div class="t" style="left:436.5px;top:487.12px;width:120px;text-align:center;font-size:13px;line-height:13px;color:#000;letter-spacing:-0.263px;text-indent:-0.263px;transform:scaleY(1.08);transform-origin:0 0;">-59</div>
<div class="t" style="left:481.5px;top:487.12px;width:120px;text-align:center;font-size:13px;line-height:13px;color:#000;letter-spacing:0.000px;text-indent:0.000px;transform:scaleY(1.08);transform-origin:0 0;">1</div>
<div style="left:310px;top:504px;width:56px;height:19px;background:#ADFF2F;"></div>
<div style="left:367px;top:504px;width:99px;height:19px;background:#ADFF2F;"></div>
<div class="t" style="left:311.5px;top:507.12px;font-size:13px;line-height:13px;color:#000;letter-spacing:-0.057px;transform:scaleY(1.08);transform-origin:0 0;">SON</div>
<div class="t" style="left:356.5px;top:507.12px;width:120px;text-align:center;font-size:13px;line-height:13px;color:#000;letter-spacing:-0.300px;text-indent:-0.300px;transform:scaleY(1.08);transform-origin:0 0;">23 285 606</div>
<div class="t" style="left:436.5px;top:507.12px;width:120px;text-align:center;font-size:13px;line-height:13px;color:#000;letter-spacing:-0.263px;text-indent:-0.263px;transform:scaleY(1.08);transform-origin:0 0;">-69</div>
<div class="t" style="left:481.5px;top:507.12px;width:120px;text-align:center;font-size:13px;line-height:13px;color:#000;letter-spacing:0.000px;text-indent:0.000px;transform:scaleY(1.08);transform-origin:0 0;">1</div>
<div style="left:310px;top:524px;width:56px;height:19px;background:#ADFF2F;"></div>
<div style="left:367px;top:524px;width:99px;height:19px;background:#ADFF2F;"></div>
<div class="t" style="left:311.5px;top:527.12px;font-size:13px;line-height:13px;color:#000;letter-spacing:-0.057px;transform:scaleY(1.08);transform-origin:0 0;">SON</div>
<div class="t" style="left:356.5px;top:527.12px;width:120px;text-align:center;font-size:13px;line-height:13px;color:#000;letter-spacing:-0.300px;text-indent:-0.300px;transform:scaleY(1.08);transform-origin:0 0;">23 285 607</div>
<div class="t" style="left:436.5px;top:527.12px;width:120px;text-align:center;font-size:13px;line-height:13px;color:#000;letter-spacing:-0.263px;text-indent:-0.263px;transform:scaleY(1.08);transform-origin:0 0;">-78</div>
<div class="t" style="left:481.5px;top:527.12px;width:120px;text-align:center;font-size:13px;line-height:13px;color:#008000;letter-spacing:0.000px;text-indent:0.000px;transform:scaleY(1.08);transform-origin:0 0;">7</div>
<div style="left:310px;top:544px;width:56px;height:19px;background:#FFA07A;"></div>
<div style="left:367px;top:544px;width:99px;height:19px;background:#FFA07A;"></div>
<div class="t" style="left:311.5px;top:547.12px;font-size:13px;line-height:13px;color:#000;letter-spacing:-0.057px;transform:scaleY(1.08);transform-origin:0 0;">SON</div>
<div class="t" style="left:356.5px;top:547.12px;width:120px;text-align:center;font-size:13px;line-height:13px;color:#000;letter-spacing:-0.300px;text-indent:-0.300px;transform:scaleY(1.08);transform-origin:0 0;">28 892 808</div>
<div class="t" style="left:436.5px;top:547.12px;width:120px;text-align:center;font-size:13px;line-height:13px;color:#000;letter-spacing:-0.263px;text-indent:-0.263px;transform:scaleY(1.08);transform-origin:0 0;">-53</div>
<div class="t" style="left:481.5px;top:547.12px;width:120px;text-align:center;font-size:13px;line-height:13px;color:#000;letter-spacing:-0.280px;text-indent:-0.280px;transform:scaleY(1.08);transform-origin:0 0;">-2</div>
<div style="left:310px;top:564px;width:56px;height:19px;background:#FFA07A;"></div>
<div style="left:367px;top:564px;width:99px;height:19px;background:#FFA07A;"></div>
<div class="t" style="left:311.5px;top:567.12px;font-size:13px;line-height:13px;color:#000;letter-spacing:-0.057px;transform:scaleY(1.08);transform-origin:0 0;">SON</div>
<div class="t" style="left:356.5px;top:567.12px;width:120px;text-align:center;font-size:13px;line-height:13px;color:#000;letter-spacing:-0.300px;text-indent:-0.300px;transform:scaleY(1.08);transform-origin:0 0;">30 286 233</div>
<div class="t" style="left:436.5px;top:567.12px;width:120px;text-align:center;font-size:13px;line-height:13px;color:#000;letter-spacing:-0.263px;text-indent:-0.263px;transform:scaleY(1.08);transform-origin:0 0;">-63</div>
<div class="t" style="left:481.5px;top:567.12px;width:120px;text-align:center;font-size:13px;line-height:13px;color:#000;letter-spacing:-0.280px;text-indent:-0.280px;transform:scaleY(1.08);transform-origin:0 0;">-1</div>
<div style="left:557px;top:84px;width:16px;height:500px;overflow:hidden;">
<div class="t" style="left:5px;top:203.12px;font-size:13px;line-height:13px;transform:scaleY(1.08);transform-origin:0 0;">18</div>
<div class="t" style="left:5px;top:223.12px;font-size:13px;line-height:13px;transform:scaleY(1.08);transform-origin:0 0;">7</div>
<div class="t" style="left:5px;top:443.12px;font-size:13px;line-height:13px;transform:scaleY(1.08);transform-origin:0 0;">12</div>
<div class="t" style="left:14px;top:183.12px;font-size:13px;line-height:13px;transform:scaleY(1.08);transform-origin:0 0;">1</div>
<div class="t" style="left:14px;top:263.12px;font-size:13px;line-height:13px;transform:scaleY(1.08);transform-origin:0 0;">1</div>
</div>
<div style="left:305px;top:676px;width:267px;height:1px;background:#fff;"></div>
<div style="left:306px;top:677px;width:266px;height:16px;background:#F0F0F0;"></div>
<div style="left:323px;top:684px;width:24px;height:2px;background:#858585;"></div>
<div style="left:580px;top:58px;width:351px;height:505px;background:#fff;"></div>
<div style="left:580px;top:58px;width:350px;height:1px;background:#A0A0A0;"></div>
<div style="left:580px;top:58px;width:1px;height:504px;background:#A0A0A0;"></div>
<div style="left:581px;top:59px;width:348px;height:1px;background:#696969;"></div>
<div style="left:581px;top:59px;width:1px;height:502px;background:#696969;"></div>
<div style="left:580px;top:562px;width:351px;height:1px;background:#FFFFFF;"></div>
<div style="left:930px;top:58px;width:1px;height:505px;background:#FFFFFF;"></div>
<div style="left:581px;top:561px;width:349px;height:1px;background:#E3E3E3;"></div>
<div style="left:929px;top:59px;width:1px;height:503px;background:#E3E3E3;"></div>
<div class="t" style="left:591.80px;top:62.12px;font-size:13px;line-height:13px;color:#00008B;letter-spacing:-0.060px;transform:scale(1.0000,1.0800);transform-origin:0 0;">Zeitpunkt : 2024-12-16 11:27:48</div>
<div class="t" style="left:590.80px;top:78.12px;font-size:13px;line-height:13px;color:#00008B;letter-spacing:0.005px;transform:scale(1.0000,1.0800);transform-origin:0 0;">Busadresse : 000, Ident.Nr. : 00001450</div>
<div class="t" style="left:590.80px;top:94.12px;font-size:13px;line-height:13px;color:#00008B;letter-spacing:0.107px;transform:scale(1.0000,1.0800);transform-origin:0 0;">Hersteller : EIE, Version : 012</div>
<div class="t" style="left:590.80px;top:110.12px;font-size:13px;line-height:13px;color:#00008B;letter-spacing:-0.083px;transform:scale(1.0000,1.0800);transform-origin:0 0;">Medium : Rauchmelder (26), Zugriffsnummer : 195</div>
<div class="t" style="left:590.80px;top:126.12px;font-size:13px;line-height:13px;color:#00008B;letter-spacing:0.320px;transform:scale(1.0000,1.0800);transform-origin:0 0;">Status : OK</div>
<div class="t" style="left:590.80px;top:142.12px;font-size:13px;line-height:13px;color:#00008B;letter-spacing:0.013px;transform:scale(1.0000,1.0800);transform-origin:0 0;">Signature : 0000</div>
<div class="t" style="left:591.00px;top:158.12px;font-size:13px;line-height:13px;color:#FF0000;letter-spacing:0.000px;transform:scale(1.0000,1.0800);transform-origin:0 0;">01 :</div>
<div class="t" style="left:617.00px;top:160.00px;font-size:12px;line-height:12px;color:#00008B;letter-spacing:0.148px;">Software Versionsnr. = 10006</div>
<div class="t" style="left:591.00px;top:174.12px;font-size:13px;line-height:13px;color:#FF0000;letter-spacing:0.000px;transform:scale(1.0000,1.0800);transform-origin:0 0;">02 :</div>
<div class="t" style="left:618.00px;top:176.00px;font-size:12px;line-height:12px;color:#00008B;letter-spacing:0.037px;">Zeitpunkt = 2024-12-16 10:28</div>
<div class="t" style="left:591.00px;top:190.12px;font-size:13px;line-height:13px;color:#FF0000;letter-spacing:0.000px;transform:scale(1.0000,1.0800);transform-origin:0 0;">03 :</div>
<div class="t" style="left:617.00px;top:192.00px;font-size:12px;line-height:12px;color:#00008B;letter-spacing:0.100px;">Fehlerflags binär = 0</div>
<div class="t" style="left:591.00px;top:206.12px;font-size:13px;line-height:13px;color:#FF0000;letter-spacing:0.000px;transform:scale(1.0000,1.0800);transform-origin:0 0;">04 :</div>
<div class="t" style="left:617.00px;top:208.00px;font-size:12px;line-height:12px;color:#00008B;letter-spacing:0.176px;">Datum = 2020-07-08</div>
<div class="t" style="left:617.00px;top:223.00px;font-size:12px;line-height:12px;color:#8B0000;letter-spacing:0.167px;">Tarif 2</div>
<div class="t" style="left:591.00px;top:237.12px;font-size:13px;line-height:13px;color:#FF0000;letter-spacing:0.000px;transform:scale(1.0000,1.0800);transform-origin:0 0;">05 :</div>
<div class="t" style="left:617.00px;top:239.00px;font-size:12px;line-height:12px;color:#00008B;letter-spacing:0.176px;">Datum = 2024-09-16</div>
<div class="t" style="left:616.00px;top:254.00px;font-size:12px;line-height:12px;color:#8B0000;letter-spacing:0.083px;">Speichernr. 1</div>
<div class="t" style="left:591.00px;top:268.12px;font-size:13px;line-height:13px;color:#FF0000;letter-spacing:0.000px;transform:scale(1.0000,1.0800);transform-origin:0 0;">07 :</div>
<div class="t" style="left:617.00px;top:270.00px;font-size:12px;line-height:12px;color:#00008B;letter-spacing:0.118px;">Speicherzähler = 0</div>
<div class="t" style="left:613.00px;top:285.00px;font-size:12px;line-height:12px;color:#8B0000;letter-spacing:0.125px;">Unitnr. 1 Tarif 1</div>
<div class="t" style="left:591.00px;top:299.12px;font-size:13px;line-height:13px;color:#FF0000;letter-spacing:0.000px;transform:scale(1.0000,1.0800);transform-origin:0 0;">08 :</div>
<div class="t" style="left:617.00px;top:301.00px;font-size:12px;line-height:12px;color:#00008B;letter-spacing:0.176px;">Datum = 2000-01-01</div>
<div class="t" style="left:613.00px;top:316.00px;font-size:12px;line-height:12px;color:#8B0000;letter-spacing:0.125px;">Unitnr. 1 Tarif 1</div>
<div class="t" style="left:591.00px;top:330.12px;font-size:13px;line-height:13px;color:#FF0000;letter-spacing:0.000px;transform:scale(1.0000,1.0800);transform-origin:0 0;">09 :</div>
<div class="t" style="left:617.00px;top:332.00px;font-size:12px;line-height:12px;color:#00008B;letter-spacing:0.111px;">Speicherzähler = 12</div>
<div class="t" style="left:613.00px;top:347.00px;font-size:12px;line-height:12px;color:#8B0000;letter-spacing:0.188px;">Unitnr. 1 Tarif 2</div>
<div class="t" style="left:590.00px;top:361.12px;font-size:13px;line-height:13px;color:#FF0000;letter-spacing:0.333px;transform:scale(1.0000,1.0800);transform-origin:0 0;">10 :</div>
<div class="t" style="left:618.00px;top:363.00px;font-size:12px;line-height:12px;color:#00008B;letter-spacing:0.190px;">Tarifdauer = 65535 min</div>
<div class="t" style="left:613.00px;top:378.00px;font-size:12px;line-height:12px;color:#8B0000;letter-spacing:0.188px;">Unitnr. 1 Tarif 2</div>
<div class="t" style="left:590.00px;top:392.12px;font-size:13px;line-height:13px;color:#FF0000;letter-spacing:0.667px;transform:scale(1.0000,1.0800);transform-origin:0 0;">11 :</div>
<div class="t" style="left:617.00px;top:394.00px;font-size:12px;line-height:12px;color:#00008B;letter-spacing:0.176px;">Datum = 2023-10-04</div>
<div class="t" style="left:613.00px;top:409.00px;font-size:12px;line-height:12px;color:#8B0000;letter-spacing:0.188px;">Unitnr. 1 Tarif 2</div>
<div class="t" style="left:590.00px;top:423.12px;font-size:13px;line-height:13px;color:#FF0000;letter-spacing:0.333px;transform:scale(1.0000,1.0800);transform-origin:0 0;">12 :</div>
<div class="t" style="left:617.00px;top:425.00px;font-size:12px;line-height:12px;color:#00008B;letter-spacing:0.111px;">Speicherzähler = 22</div>
<div class="t" style="left:613.00px;top:440.00px;font-size:12px;line-height:12px;color:#8B0000;letter-spacing:0.188px;">Unitnr. 1 Tarif 3</div>
<div class="t" style="left:590.00px;top:454.12px;font-size:13px;line-height:13px;color:#FF0000;letter-spacing:0.333px;transform:scale(1.0000,1.0800);transform-origin:0 0;">13 :</div>
<div class="t" style="left:617.00px;top:456.00px;font-size:12px;line-height:12px;color:#00008B;letter-spacing:0.176px;">Datum = 2023-10-04</div>
<div class="t" style="left:613.00px;top:471.00px;font-size:12px;line-height:12px;color:#8B0000;letter-spacing:0.188px;">Unitnr. 1 Tarif 3</div>
<div style="left:580px;top:569px;width:349px;height:123px;background:#fff;border:1px solid #707782;"></div>
<div style="left:582px;top:587px;width:340px;height:1px;background:#E6E6E6;"></div>
<div style="left:582px;top:604px;width:340px;height:1px;background:#E6E6E6;"></div>
<div style="left:582px;top:621px;width:340px;height:1px;background:#E6E6E6;"></div>
<div style="left:582px;top:638px;width:340px;height:1px;background:#E6E6E6;"></div>
<div style="left:582px;top:655px;width:340px;height:1px;background:#E6E6E6;"></div>
<div style="left:582px;top:672px;width:340px;height:1px;background:#E6E6E6;"></div>
<div style="left:582px;top:689px;width:340px;height:1px;background:#E6E6E6;"></div>
<div style="left:886px;top:571px;width:1px;height:120px;background:#E6E6E6;"></div>
<div style="left:922px;top:571px;width:1px;height:120px;background:#E6E6E6;"></div>
<div style="left:586px;top:571px;width:300px;height:16px;background:#F2F2F2;"></div>
<div style="left:887px;top:571px;width:35px;height:16px;background:#F2F2F2;"></div>
<div class="t" style="left:588.06px;top:574.00px;font-size:12px;line-height:12px;color:#000;transform:scale(0.8862,1.0000);transform-origin:0 0;">AES Schlüssel nicht vorhanden</div>
<div class="t" style="left:910.25px;top:574.00px;font-size:12px;line-height:12px;color:#000;transform:scale(0.8333,1.0000);transform-origin:0 0;">1</div>
<div style="left:586px;top:588px;width:300px;height:16px;background:#D3D3D3;"></div>
<div style="left:887px;top:588px;width:35px;height:16px;background:#D3D3D3;"></div>
<div class="t" style="left:588.17px;top:591.00px;font-size:12px;line-height:12px;color:#000;transform:scale(0.8897,1.0000);transform-origin:0 0;">Unbekanntes Funkprotokoll</div>
<div class="t" style="left:910.00px;top:591.00px;font-size:12px;line-height:12px;color:#000;">6</div>
<div style="left:586px;top:605px;width:300px;height:16px;background:#ADFF2F;"></div>
<div style="left:887px;top:605px;width:35px;height:16px;background:#ADFF2F;"></div>
<div class="t" style="left:588.16px;top:608.00px;font-size:12px;line-height:12px;color:#000;transform:scale(0.8932,1.0000);transform-origin:0 0;">Daten wurden erfolgreich entschlüsselt</div>
<div class="t" style="left:910.00px;top:608.00px;font-size:12px;line-height:12px;color:#000;">6</div>
<div style="left:586px;top:622px;width:300px;height:16px;background:#90EE90;"></div>
<div style="left:887px;top:622px;width:35px;height:16px;background:#90EE90;"></div>
<div class="t" style="left:588.18px;top:625.00px;font-size:12px;line-height:12px;color:#000;transform:scale(0.8797,1.0000);transform-origin:0 0;">Daten sind nicht verschlüsselt</div>
<div class="t" style="left:904.12px;top:625.00px;font-size:12px;line-height:12px;color:#000;transform:scale(0.9167,1.0000);transform-origin:0 0;">10</div>
<div style="left:586px;top:639px;width:300px;height:16px;background:#FFA07A;"></div>
<div style="left:887px;top:639px;width:35px;height:16px;background:#FFA07A;"></div>
<div class="t" style="left:588.19px;top:642.00px;font-size:12px;line-height:12px;color:#000;transform:scale(0.8730,1.0000);transform-origin:0 0;">Falscher AES Schlüssel</div>
<div class="t" style="left:910.00px;top:642.00px;font-size:12px;line-height:12px;color:#000;">2</div>
</body></html>
